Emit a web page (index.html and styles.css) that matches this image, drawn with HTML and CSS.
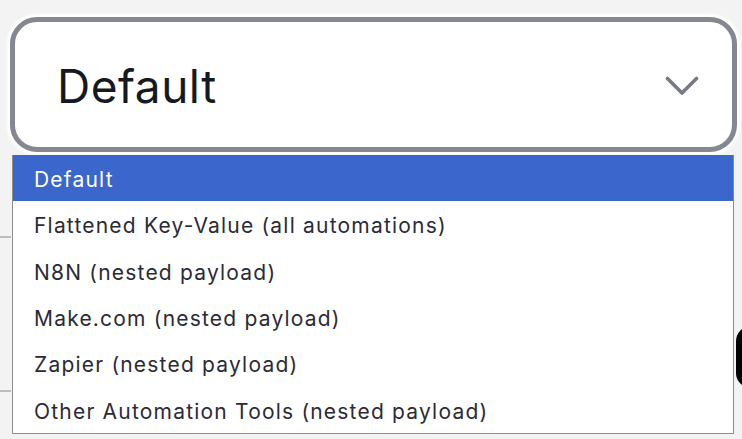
FILE: index.html
```html
<!DOCTYPE html>
<html>
<head>
<meta charset="utf-8">
<link rel="stylesheet" href="styles.css">
</head>
<body>
<div class="page">
  <div class="bg-line bg-line-1"></div>
  <div class="bg-line bg-line-2"></div>
  <div class="bg-blob"></div>
  <div class="select">
    <span class="select-value">Default</span>
    <svg class="chevron" width="34" height="20" viewBox="0 0 34 20"><polyline points="2.5,2.5 17,17 31.5,2.5" fill="none" stroke="#777a85" stroke-width="3.6" stroke-linecap="round" stroke-linejoin="round"/></svg>
  </div>
  <ul class="options">
    <li class="option selected">Default</li>
    <li class="option">Flattened Key-Value (all automations)</li>
    <li class="option">N8N (nested payload)</li>
    <li class="option">Make.com (nested payload)</li>
    <li class="option">Zapier (nested payload)</li>
    <li class="option">Other Automation Tools (nested payload)</li>
  </ul>
</div>
</body>
</html>
```

FILE: styles.css
```css
html, body {
  margin: 0;
  padding: 0;
  background: #f3f3f3;
  width: 742px;
  height: 439px;
  overflow: hidden;
}
.page {
  position: relative;
  width: 742px;
  height: 439px;
  padding-top: 17px;
  box-sizing: border-box;
  font-family: Inter, "Noto Sans", sans-serif;
}
.bg-line {
  position: absolute;
  left: 0;
  width: 11px;
  height: 2px;
  background: #bdbdbd;
}
.bg-line-1 { top: 236px; }
.bg-line-2 { top: 390px; }
.bg-blob {
  position: absolute;
  left: 736px;
  top: 326px;
  width: 30px;
  height: 62px;
  border-radius: 26px;
  background: #000;
}
.select {
  position: relative;
  margin-left: 10px;
  width: 727px;
  height: 135px;
  box-sizing: border-box;
  border: 5px solid #868891;
  border-radius: 27px;
  background: #fff;
  box-shadow: 0 0 3px 3px #fff;
  display: flex;
  align-items: center;
  justify-content: space-between;
  padding: 0 33px 0 42px;
}
.select-value {
  font-size: 46px;
  color: #171922;
  letter-spacing: 0.5px;
  margin-top: 2px;
}
.chevron {
  display: block;
  margin-top: 2px;
}
.options {
  position: relative;
  list-style: none;
  margin: 3px 0 0 12px;
  padding: 0;
  width: 722px;
  box-sizing: border-box;
  border: 1px solid #8c8c8c;
  border-top: none;
  background: #fff;
}
.option {
  height: 46.3px;
  display: flex;
  align-items: center;
  padding: 3px 0 0 21px;
  box-sizing: border-box;
  font-size: 21px;
  letter-spacing: 1.2px;
  color: #2b2b36;
}
.option.selected {
  background: #3b66cc;
  color: #fff;
}
```
